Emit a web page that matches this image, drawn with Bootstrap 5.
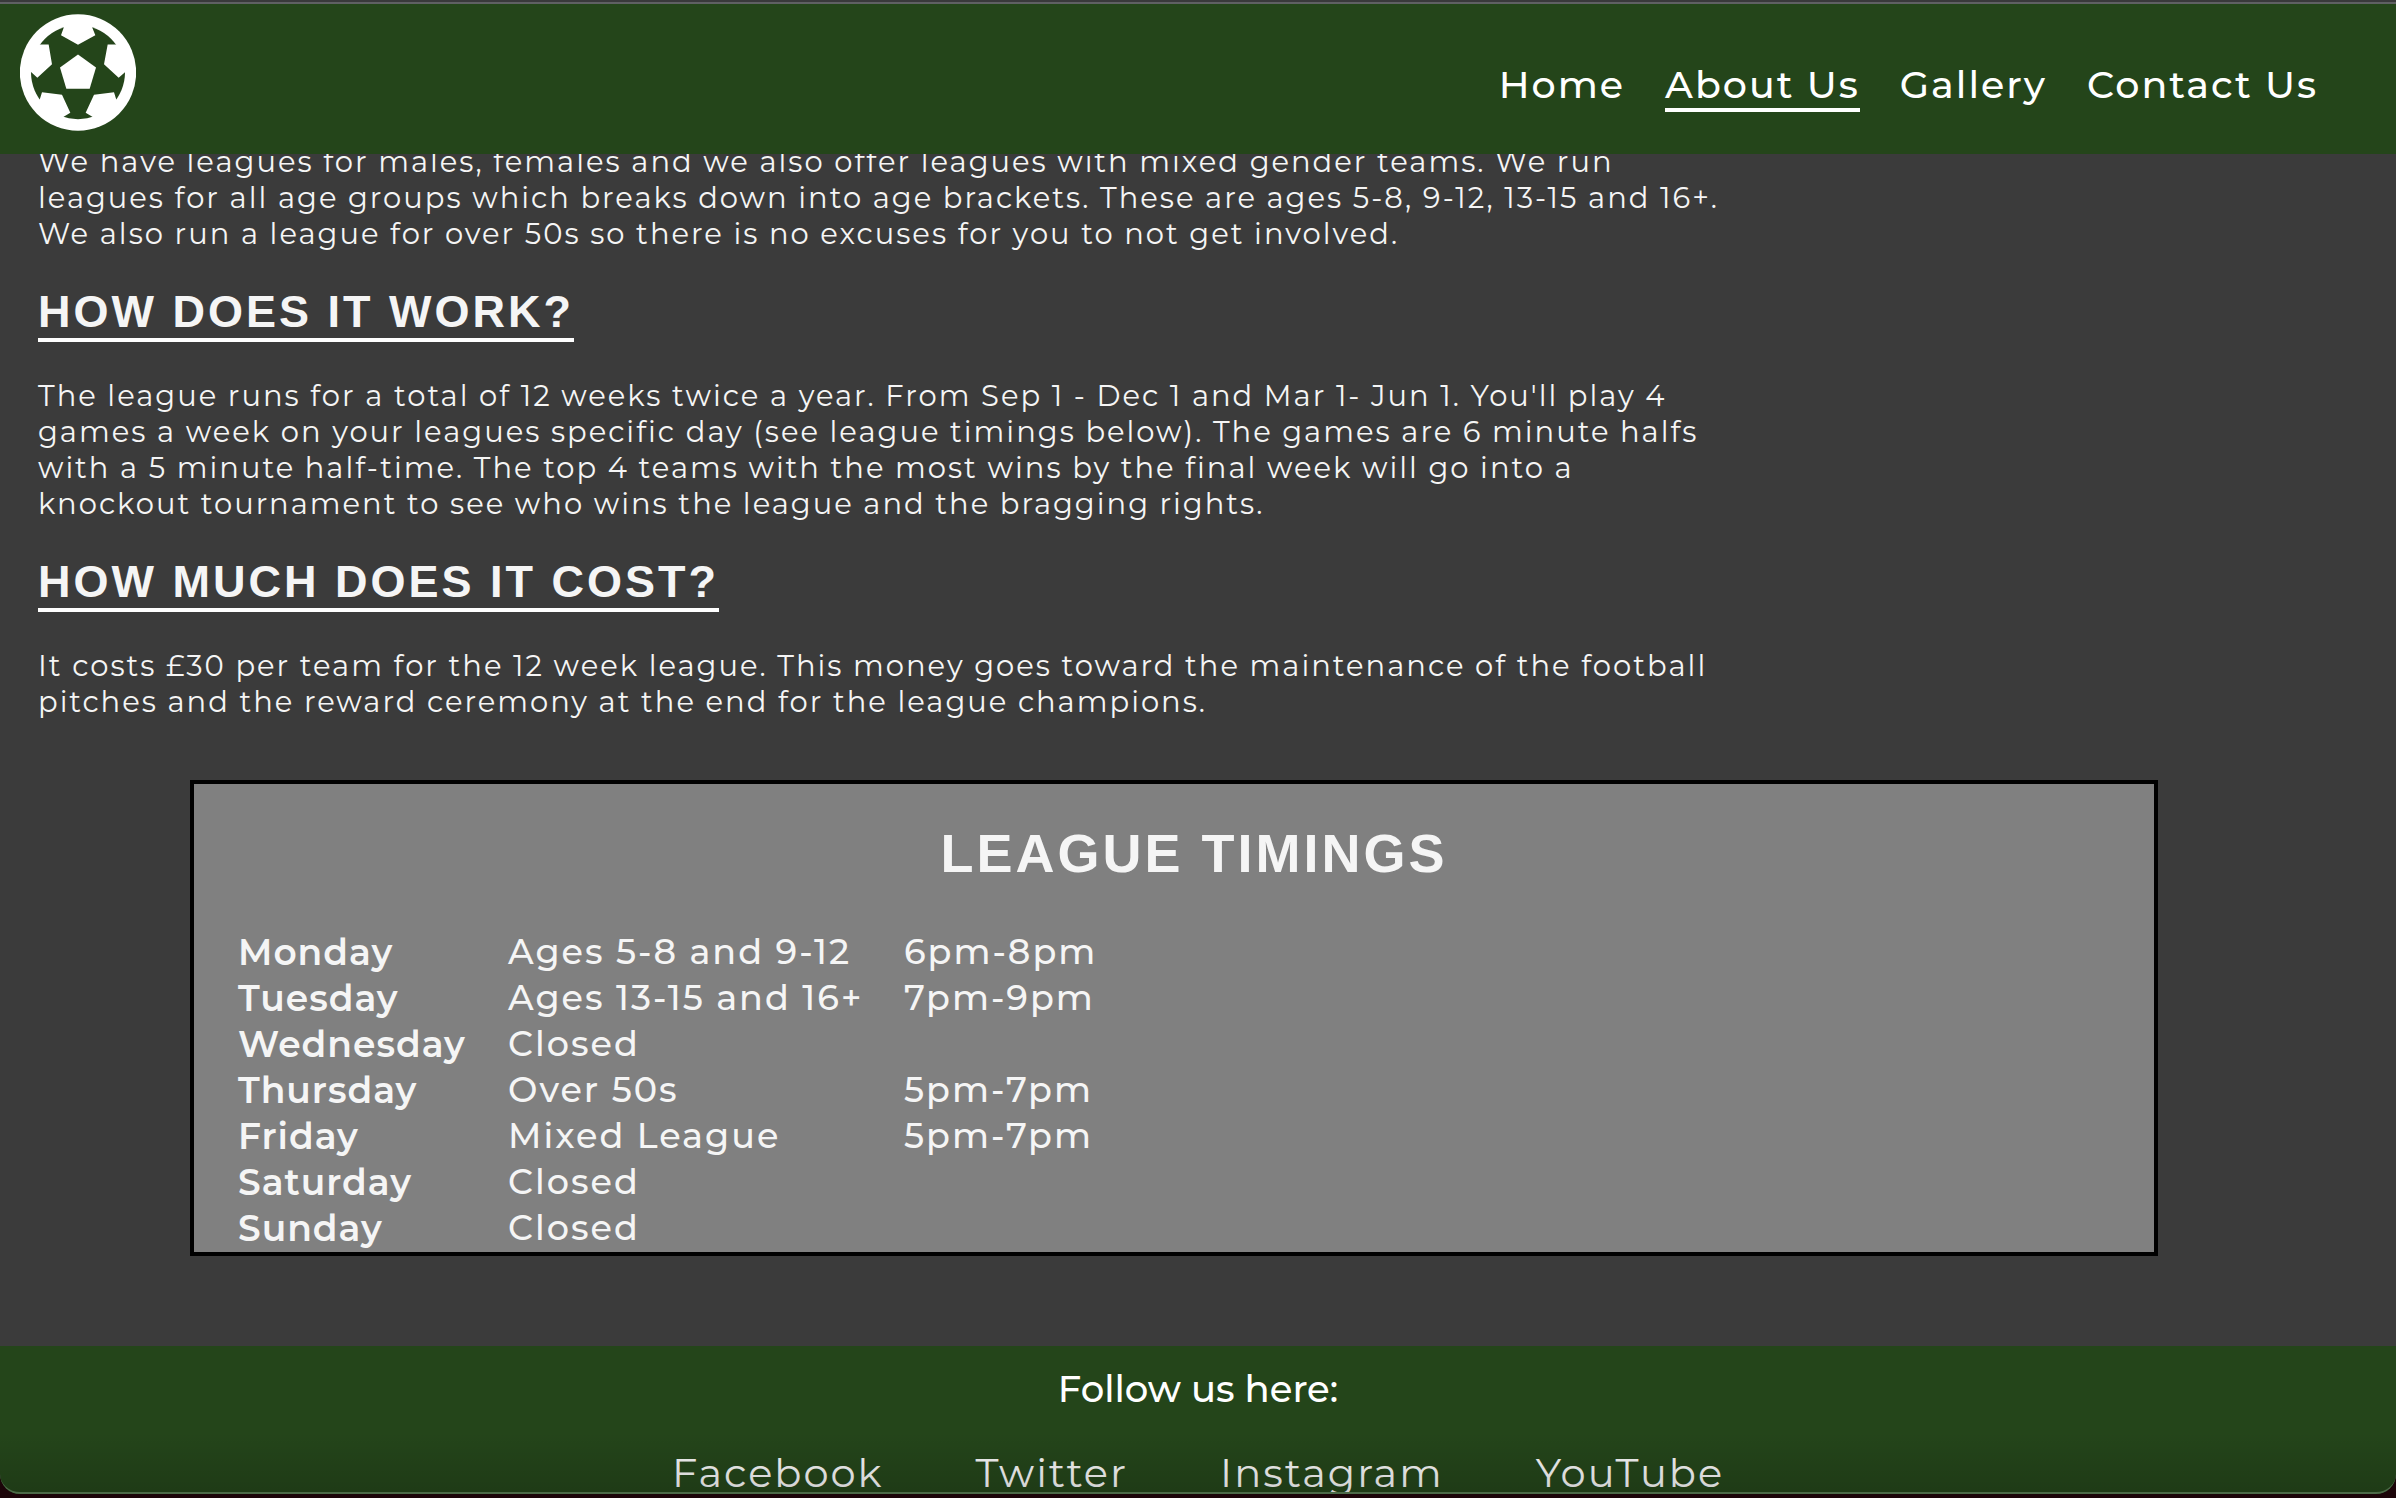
<!DOCTYPE html>
<html lang="en">
<head>
<meta charset="utf-8">
<meta name="viewport" content="width=device-width, initial-scale=1">
<title>About Us</title>
<link href="https://cdn.jsdelivr.net/npm/bootstrap@5.3.0/dist/css/bootstrap.min.css" rel="stylesheet">
<style>
  body { background: #1c0509; color: #f5f5f5; font-family: Montserrat, Inter, sans-serif; letter-spacing: 2px; }
  .app-window { height: calc(100vh - 4px); border-top: 2px solid #39393b; background: #3b3b3b; border-radius: 0 0 20px 20px; }
  /* edge line and soft shade along the foot of the window */
  .app-window::after {
    content: ""; position: absolute; inset: 0; pointer-events: none; z-index: 20;
    border-bottom: 2px solid #4c6a48; border-radius: 0 0 20px 20px;
    background: linear-gradient(to top, rgba(0, 0, 0, .15), rgba(0, 0, 0, 0) 60px);
  }
  .site-bar { height: 152px; background: #24451a; border-top: 2px solid #5f6063; padding: 10px 78px 0 20px; z-index: 10; }
  .site-bar .nav { gap: 40px; padding-top: 49px; }
  .site-bar .nav-link { color: #fff; font-size: 38px; font-weight: 500; line-height: 44px; padding: 0 0 1px; border-bottom: 4px solid transparent; }
  .site-bar .nav-link.active { border-color: #fff; }
  .about-text { padding: 142px 38px 0; }
  .about-text p { font-size: 29px; line-height: 36px; margin: 0; }
  .about-text h2 { display: table; font: bold 45px/52px "Liberation Sans", Arial, sans-serif; letter-spacing: 3px; border-bottom: 4px solid #fff; margin: 34px 0 36px; }
  .timings { width: 82.14%; margin: 60px 0 90px 190px; border: 4px solid #000; background: #808080; padding-left: 40px; }
  .timings h2 { font: bold 54px/64px "Liberation Sans", Arial, sans-serif; letter-spacing: 3px; margin: 37px 0 44px; }
  .timings table { margin-bottom: 1px; }
  .timings th, .timings td { font-size: 35px; line-height: 46px; padding: 0 0 0 4px; white-space: nowrap; }
  .timings th { width: 270px; font-size: 36px; font-weight: 600; letter-spacing: 1px; }
  .timings td { font-weight: 500; }
  .timings td:nth-child(2) { width: 396px; }
  .site-foot { background: #24451a; height: 220px; padding-top: 19px; }
  .site-foot h3 { color: #fff; font-size: 37px; line-height: 48px; font-weight: 500; letter-spacing: 0; margin-bottom: 36px; }
  .site-foot .nav { gap: 92px; }
  .site-foot a { color: #f5f5f5; font-size: 40px; line-height: 48px; padding: 0; }
</style>
</head>
<body class="overflow-hidden">
<div class="app-window position-relative overflow-hidden">
  <header class="site-bar position-absolute top-0 start-0 end-0 d-flex justify-content-between align-items-start">
    <a href="#" aria-label="Home page">
      <svg class="d-block" width="116" height="117" viewBox="60 44 348 350" aria-hidden="true">
        <circle cx="234" cy="219" r="174.500" fill="#fff"/>
        <circle cx="234" cy="218" r="141" fill="#24451a"/>
        <g fill="#fff">
          <path d="M234 165 288 204 269 268H199L180 204Z"/>
          <path d="M191 85 183 107 234 136 286 107 277 85 270 60H198Z"/>
          <path d="M120 135H146L156 194 112 235 94 218 75 218 85 150Z"/>
          <path d="M348 135H323L312 194 356 235 375 218 394 218 383 150Z"/>
          <path d="M119 301 126 278 186 286 211 340 191 352 170 372 100 315Z"/>
          <path d="M349 301 342 278 282 286 257 340 277 352 298 372 368 315Z"/>
        </g>
      </svg>
    </a>
    <nav class="nav flex-nowrap text-nowrap">
      <a class="nav-link" href="#">Home</a>
      <a class="nav-link active" aria-current="page" href="#">About Us</a>
      <a class="nav-link" href="#">Gallery</a>
      <a class="nav-link" href="#">Contact Us</a>
    </nav>
  </header>

  <main>
    <section class="about-text">
      <p>We have leagues for males, females and we also offer leagues with mixed gender teams. We run<br>
        leagues for all age groups which breaks down into age brackets. These are ages 5-8, 9-12, 13-15 and 16+.<br>
        We also run a league for over 50s so there is no excuses for you to not get involved.</p>
      <h2>HOW DOES IT WORK?</h2>
      <p>The league runs for a total of 12 weeks twice a year. From Sep 1 - Dec 1 and Mar 1- Jun 1. You'll play 4<br>
        games a week on your leagues specific day (see league timings below). The games are 6 minute halfs<br>
        with a 5 minute half-time. The top 4 teams with the most wins by the final week will go into a<br>
        knockout tournament to see who wins the league and the bragging rights.</p>
      <h2>HOW MUCH DOES IT COST?</h2>
      <p>It costs £30 per team for the 12 week league. This money goes toward the maintenance of the football<br>
        pitches and the reward ceremony at the end for the league champions.</p>
    </section>

    <section class="timings overflow-hidden">
      <h2 class="text-center">LEAGUE TIMINGS</h2>
      <table>
        <tbody>
          <tr><th scope="row">Monday</th><td>Ages 5-8 and 9-12</td><td>6pm-8pm</td></tr>
          <tr><th scope="row">Tuesday</th><td>Ages 13-15 and 16+</td><td>7pm-9pm</td></tr>
          <tr><th scope="row">Wednesday</th><td>Closed</td><td></td></tr>
          <tr><th scope="row">Thursday</th><td>Over 50s</td><td>5pm-7pm</td></tr>
          <tr><th scope="row">Friday</th><td>Mixed League</td><td>5pm-7pm</td></tr>
          <tr><th scope="row">Saturday</th><td>Closed</td><td></td></tr>
          <tr><th scope="row">Sunday</th><td>Closed</td><td></td></tr>
        </tbody>
      </table>
    </section>
  </main>

  <footer class="site-foot text-center">
    <h3>Follow us here:</h3>
    <nav class="nav justify-content-center" aria-label="Social media">
      <a class="nav-link" href="#">Facebook</a>
      <a class="nav-link" href="#">Twitter</a>
      <a class="nav-link" href="#">Instagram</a>
      <a class="nav-link" href="#">YouTube</a>
    </nav>
  </footer>
</div>
<script src="https://cdn.jsdelivr.net/npm/bootstrap@5.3.0/dist/js/bootstrap.bundle.min.js"></script>
</body>
</html>
